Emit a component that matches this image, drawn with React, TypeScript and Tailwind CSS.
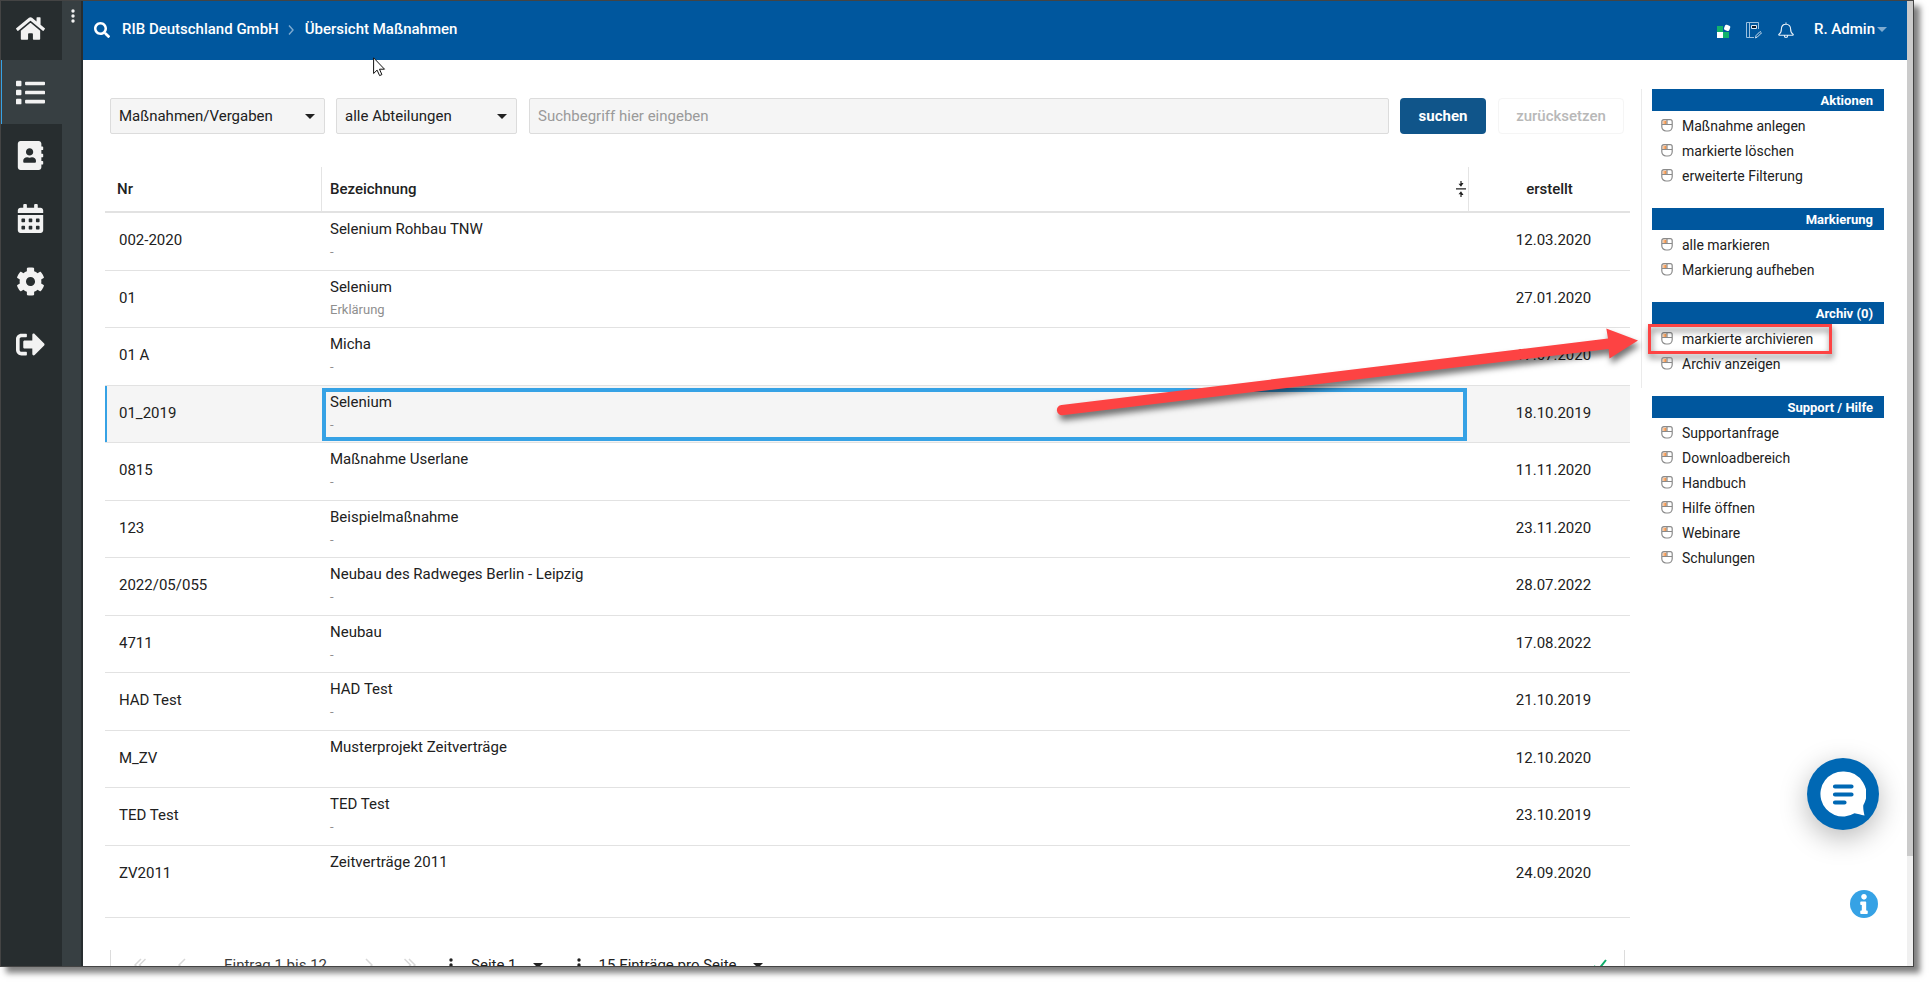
import React from "react";
import {
  FaHome,
  FaList,
  FaAddressBook,
  FaCalendarAlt,
  FaCog,
  FaSignOutAlt,
  FaSearch,
  FaInfo,
} from "react-icons/fa";

type Row = { nr: string; title: string; sub: string; date: string; selected?: boolean };

const rows: Row[] = [
  { nr: "002-2020", title: "Selenium Rohbau TNW", sub: "-", date: "12.03.2020" },
  { nr: "01", title: "Selenium", sub: "Erklärung", date: "27.01.2020" },
  { nr: "01 A", title: "Micha", sub: "-", date: "17.07.2020" },
  { nr: "01_2019", title: "Selenium", sub: "-", date: "18.10.2019", selected: true },
  { nr: "0815", title: "Maßnahme Userlane", sub: "-", date: "11.11.2020" },
  { nr: "123", title: "Beispielmaßnahme", sub: "-", date: "23.11.2020" },
  { nr: "2022/05/055", title: "Neubau des Radweges Berlin - Leipzig", sub: "-", date: "28.07.2022" },
  { nr: "4711", title: "Neubau", sub: "-", date: "17.08.2022" },
  { nr: "HAD Test", title: "HAD Test", sub: "-", date: "21.10.2019" },
  { nr: "M_ZV", title: "Musterprojekt Zeitverträge", sub: "", date: "12.10.2020" },
  { nr: "TED Test", title: "TED Test", sub: "-", date: "23.10.2019" },
  { nr: "ZV2011", title: "Zeitverträge 2011", sub: "", date: "24.09.2020" },
];

const sections = [
  { title: "Aktionen", items: ["Maßnahme anlegen", "markierte löschen", "erweiterte Filterung"] },
  { title: "Markierung", items: ["alle markieren", "Markierung aufheben"] },
  { title: "Archiv (0)", items: ["markierte archivieren", "Archiv anzeigen"] },
];

const support = {
  title: "Support / Hilfe",
  items: ["Supportanfrage", "Downloadbereich", "Handbuch", "Hilfe öffnen", "Webinare", "Schulungen"],
};

const nav = [
  { label: "Übersicht", Icon: FaList, active: true },
  { label: "Adressbuch", Icon: FaAddressBook },
  { label: "Kalender", Icon: FaCalendarAlt },
  { label: "Einstellungen", Icon: FaCog },
  { label: "Abmelden", Icon: FaSignOutAlt },
];

function Caret({ className }: { className?: string }) {
  return (
    <svg viewBox="0 0 10 5" className={`h-[5px] w-[10px] shrink-0 ${className ?? ""}`} fill="currentColor" aria-hidden="true">
      <path d="M0 0h10L5 5z" />
    </svg>
  );
}

function MouseIcon() {
  return (
    <svg viewBox="0 0 12 13" className="h-[13px] w-3 shrink-0" fill="none" aria-hidden="true">
      <path d="M1.500 1.500H6v4H1.500z" fill="#fbc79c" />
      <path
        d="M2.800.7h6.400a2 2 0 0 1 2 2v5.100a4.200 4.200 0 0 1-4.200 4.200H5A4.200 4.200 0 0 1 .8 7.800V2.700a2 2 0 0 1 2-2zM.8 5.500h10.400M6 .7v4.800"
        stroke="#8a8a8a"
        strokeWidth="1.200"
      />
      <path d="M4.200 2v3" stroke="#f08a3c" strokeWidth="1.200" />
    </svg>
  );
}

function Dots({ className }: { className?: string }) {
  return (
    <svg viewBox="0 0 4 14" className={`h-[14px] w-1 shrink-0 ${className ?? ""}`} fill="currentColor" aria-hidden="true">
      <circle cx="2" cy="2" r="1.700" />
      <circle cx="2" cy="7" r="1.700" />
      <circle cx="2" cy="12" r="1.700" />
    </svg>
  );
}

function Chevron({ double, flip }: { double?: boolean; flip?: boolean }) {
  return (
    <svg
      viewBox={double ? "0 0 12 14" : "0 0 8 14"}
      className={`h-[14px] shrink-0 ${double ? "w-3" : "w-2"} ${flip ? "-scale-x-100" : ""}`}
      fill="none"
      stroke="currentColor"
      strokeWidth="1.500"
      aria-hidden="true"
    >
      <path d={double ? "M7 1 1 7l6 6M11.500 1l-6 6 6 6" : "M7 1 1 7l6 6"} />
    </svg>
  );
}

function MenuSection({ title, items, mark }: { title: string; items: string[]; mark?: string }) {
  return (
    <section className="pb-5">
      <h2 className="h-[22px] bg-[#00579e] pr-[11px] text-right text-[13px] leading-[23px] font-bold text-white">
        {title}
      </h2>
      <ul className="pt-0.5">
        {items.map((item) => (
          <li key={item} className="relative">
            <a href="#" className="flex h-[25px] items-center gap-[9px] pl-[9px] text-sm">
              <MouseIcon />
              {item}
            </a>
            {item === mark && (
              <span className="pointer-events-none absolute -top-0.5 -left-1 h-[30px] w-[184px] border-[3px] border-[#fd4343] drop-shadow-[1px_4px_3px_rgba(0,0,0,0.55)]" />
            )}
          </li>
        ))}
      </ul>
    </section>
  );
}

export default function App() {
  return (
    <div className="h-screen overflow-hidden bg-white pr-[15px] pb-[15px] font-['Roboto',sans-serif] text-[15px] text-[#212121]">
      <div className="relative flex h-full border border-[#444] shadow-[6px_6px_6px_rgba(0,0,0,0.5)]">
        <nav className="flex w-[61px] shrink-0 flex-col bg-[#272d2f] text-[#f2f2f2]">
          <a href="#" aria-label="Startseite" className="flex h-[59px] items-center justify-center pr-0.5 pb-1">
            <FaHome size={29} />
          </a>
          {nav.map(({ label, Icon, active }) => (
            <a
              key={label}
              href="#"
              aria-label={label}
              className={
                active
                  ? "flex h-16 items-center justify-center border-l border-[#36a2e5] bg-[#373f42] pr-[3px]"
                  : "flex h-[63px] items-center justify-center pr-0.5"
              }
            >
              <Icon size={29} />
            </a>
          ))}
        </nav>
        <div className="flex w-[21px] shrink-0 justify-center border-r-2 border-[#272d2f] bg-[#373f42] pt-2 text-[#f2f2f2]">
          <Dots className="ml-0.5" />
        </div>

        <div className="flex min-w-0 flex-1 flex-col overflow-hidden">
          <header className="flex h-[59px] shrink-0 items-center bg-[#00579e] pr-5 pb-0.5 pl-[11px] font-medium text-white">
            <FaSearch size={16} />
            <a href="#" className="ml-3">RIB Deutschland GmbH</a>
            <svg viewBox="0 0 6 10" className="mr-[11px] ml-[9px] h-[10px] w-[6px]" fill="none" stroke="#7fabd0" strokeWidth="1.400" aria-hidden="true">
              <path d="M1 .5 5 5 1 9.500" />
            </svg>
            <a href="#">Übersicht Maßnahmen</a>

            <div className="ml-auto flex items-center">
              <button type="button" aria-label="Apps" className="mt-0.5">
                <svg viewBox="0 0 14 14" className="size-[14px]">
                  <path d="M0 2h6v6H0z" fill="#12b26b" />
                  <path d="M6 8h6v6H6z" fill="#12b26b" />
                  <path d="M0 8h6v6H0z" fill="#fff" />
                  <rect x="7.300" y="1" width="5.600" height="5.600" rx="1.500" fill="#fff" transform="rotate(20 10 4)" />
                </svg>
              </button>
              <button type="button" aria-label="Notizen" className="mt-0.5 ml-[15px]">
                <svg viewBox="0 0 16 17" className="h-[17px] w-4" fill="none" stroke="#9cc0de">
                  <path d="M12.500 7V.5H.5v15H8M3.500.5v15" />
                  <path d="M5.500 3.500h5v3h-5z" fill="#0a1a2a" stroke="#dce9f4" />
                  <path d="m9.500 16 .6-2.500 4-4 1.400 1.400-4 4z" stroke="#cfe0ef" />
                </svg>
              </button>
              <button type="button" aria-label="Benachrichtigungen" className="mt-0.5 ml-4">
                <svg viewBox="0 0 16 17" className="h-[17px] w-4" fill="none" stroke="#e6f0f8" strokeWidth="1.100">
                  <path d="M8 2.200c-3 0-4.600 2.200-4.600 4.800 0 3-.9 4.300-2.400 5.200-.5.400-.3 1.100.3 1.100h13.400c.6 0 .8-.7.3-1.100-1.500-.9-2.400-2.200-2.400-5.200 0-2.600-1.600-4.800-4.600-4.800zM8 .5v1.700M6.300 13.500a1.700 2 0 0 0 3.400 0" />
                </svg>
              </button>
              <button type="button" className="ml-5 flex items-center gap-0.5">
                R. Admin
                <Caret className="text-[#7fabd0]" />
              </button>
            </div>
          </header>

          <main className="flex min-h-0 flex-1 bg-white pr-[23px] pl-[22px]">
            <div className="flex min-w-0 flex-1 flex-col">
              <form className="mt-[38px] mr-[6px] ml-[5px] flex h-9 shrink-0">
                <div className="relative mr-[11px] w-[215px]">
                  <select aria-label="Bereich" className="h-9 w-full appearance-none rounded-xs border border-[#dcdcdc] bg-[#f5f5f5] px-2">
                    <option>Maßnahmen/Vergaben</option>
                  </select>
                  <Caret className="pointer-events-none absolute top-4 right-[10px]" />
                </div>
                <div className="relative mr-3 w-[181px]">
                  <select aria-label="Abteilung" className="h-9 w-full appearance-none rounded-xs border border-[#dcdcdc] bg-[#f5f5f5] px-2">
                    <option>alle Abteilungen</option>
                  </select>
                  <Caret className="pointer-events-none absolute top-4 right-[10px]" />
                </div>
                <input
                  type="text"
                  aria-label="Suchbegriff"
                  placeholder="Suchbegriff hier eingeben"
                  className="h-9 min-w-0 flex-1 rounded-xs border border-[#dcdcdc] bg-[#f5f5f5] px-2 placeholder:text-[#9a9a9a]"
                />
                <button type="submit" className="ml-[11px] w-[86px] rounded-sm bg-[#10558a] font-bold text-white">
                  suchen
                </button>
                <button type="reset" className="ml-3 w-[126px] rounded-sm border border-[#f5f5f5] font-medium text-[#b8b8b8]">
                  zurücksetzen
                </button>
              </form>

              <table className="mt-[33px] w-full shrink-0 table-fixed border-separate border-spacing-0 text-left">
                <colgroup>
                  <col className="w-[217px]" />
                  <col />
                  <col className="w-[161px]" />
                </colgroup>
                <thead>
                  <tr className="h-[46px]">
                    <th className="border-r border-b-2 border-r-[#e4e4e4] border-b-[#e2e2e2] pl-3 font-medium">Nr</th>
                    <th className="border-r border-b-2 border-r-[#e4e4e4] border-b-[#e2e2e2] pr-0.5 pl-2 font-medium">
                      <div className="flex items-center justify-between">
                        Bezeichnung
                        <svg viewBox="0 0 10 16" className="h-4 w-[10px]" fill="#212121" aria-hidden="true">
                          <path d="M0 7.300h10v1.300H0zM4.400 0h1.200v2h1.900L5 5.800 2.500 2.800h1.900zM4.400 16h1.200v-2h1.900L5 10.200 2.500 13.200h1.900z" />
                        </svg>
                      </div>
                    </th>
                    <th className="border-b-2 border-b-[#e2e2e2] text-center font-medium">erstellt</th>
                  </tr>
                </thead>
                <tbody>
                  {rows.map((row) => (
                    <tr
                      key={row.nr}
                      className={`h-[58px] last:h-[72px] even:h-[57px] last:even:h-[72px] ${row.selected ? "bg-[#f5f5f5]" : ""}`}
                    >
                      <td
                        className={`relative border-b border-[#e2e2e2] pl-[14px] align-top ${
                          row.selected ? "shadow-[inset_2px_0_0_#36a2e5]" : ""
                        }`}
                      >
                        <div className="pt-[17px] leading-5">{row.nr}</div>
                      </td>
                      <td
                        className={`relative border-b border-[#e2e2e2] pl-2 align-top ${
                          row.selected
                            ? "after:pointer-events-none after:absolute after:top-0.5 after:right-0.5 after:bottom-px after:left-0 after:border-4 after:border-[#36a2e5]"
                            : ""
                        }`}
                      >
                        <div className="pt-1.5 leading-5">{row.title}</div>
                        <div className="pt-1 text-[13px] leading-[18px] text-[#8f8f8f]">{row.sub}</div>
                      </td>
                      <td className="border-b border-[#e2e2e2] pl-2 text-center align-top">
                        <div className="pt-[17px] leading-5">{row.date}</div>
                      </td>
                    </tr>
                  ))}
                </tbody>
              </table>

              <footer className="mt-8 mr-[5px] ml-[5px] flex h-[30px] shrink-0 items-center border-x border-[#dcdcdc] pr-[17px] pl-[23px]">
                <div className="flex flex-1 items-center text-[#d8d8d8]">
                  <Chevron double />
                  <span className="ml-8"><Chevron /></span>
                  <span className="mr-[38px] ml-[38px] text-[#3c3c3c]">Eintrag 1 bis 12</span>
                  <Chevron flip />
                  <span className="ml-[31px]"><Chevron double flip /></span>
                  <Dots className="ml-[33px] text-[#212121]" />
                  <button type="button" className="ml-[18px] flex items-center gap-4 text-[#212121]">
                    Seite 1 <Caret />
                  </button>
                  <Dots className="ml-[34px] text-[#212121]" />
                  <button type="button" className="ml-[18px] flex items-center gap-4 text-[#212121]">
                    15 Einträge pro Seite <Caret />
                  </button>
                </div>
                <svg viewBox="0 0 14 14" className="size-[14px]" fill="none" stroke="#0fae6a" strokeWidth="2" aria-hidden="true">
                  <path d="M1 8l4 4 8-10" />
                </svg>
              </footer>
            </div>

            <aside className="ml-[11px] w-[243px] shrink-0 pt-[29px]">
              <div className="-mb-px h-[299px] border-l border-[#ebebeb] pl-[10px]">
                {sections.map((s) => (
                  <MenuSection key={s.title} title={s.title} items={s.items} mark="markierte archivieren" />
                ))}
              </div>
              <div className="mt-[9px] pl-[11px]">
                <MenuSection title={support.title} items={support.items} />
              </div>
            </aside>
          </main>
        </div>

        <div className="w-1.5 shrink-0 bg-[#f0f0f0]">
          <div className="h-[855px] bg-[#cbcbcb]" />
        </div>

        <button
          type="button"
          aria-label="Chat öffnen"
          className="absolute right-[34px] bottom-[136px] flex size-[72px] items-center justify-center rounded-full bg-[#0068b4] shadow-[0_8px_28px_rgba(0,0,0,0.28)]"
        >
          <svg viewBox="0 0 46 46" className="size-[46px]" aria-hidden="true">
            <path
              d="M23 .5a22.500 22.500 0 1 0 11.500 41.800c3 .6 6.500 1.500 10 2.200-.8-3.500-1.500-7-1.200-10.300A22.500 22.500 0 0 0 23 .5z"
              fill="#fff"
            />
            <path d="M15 15.500h16.500M15 23.500h16.500M15 31.500h9.500" stroke="#0068b4" strokeWidth="4.200" strokeLinecap="round" />
          </svg>
        </button>
        <button
          type="button"
          aria-label="Information"
          className="absolute right-[35px] bottom-12 flex size-7 items-center justify-center rounded-full bg-[#36a2e5] text-white"
        >
          <FaInfo size={20} />
        </button>

        <svg
          viewBox="0 0 592 100"
          className="pointer-events-none absolute top-[319px] right-[269px] h-[100px] w-[592px] drop-shadow-[2px_5px_3px_rgba(0,0,0,0.55)]"
          aria-hidden="true"
        >
          <path
            d="M9.500 85 556 18.500 554.300 8.500 586 20.500 557.500 38.500 556.600 29 10.500 95.200A5 5 0 0 1 9.500 85z"
            fill="#fd4343"
          />
        </svg>
        <svg viewBox="0 0 13 20" className="pointer-events-none absolute top-14 left-[372px] h-5 w-[13px]" aria-hidden="true">
          <path d="M.6.800v15.700l3.500-3.400 2.500 5.500 2.300-1-2.400-5.400h5z" fill="#fff" stroke="#111" strokeWidth="1" />
        </svg>
      </div>
    </div>
  );
}
